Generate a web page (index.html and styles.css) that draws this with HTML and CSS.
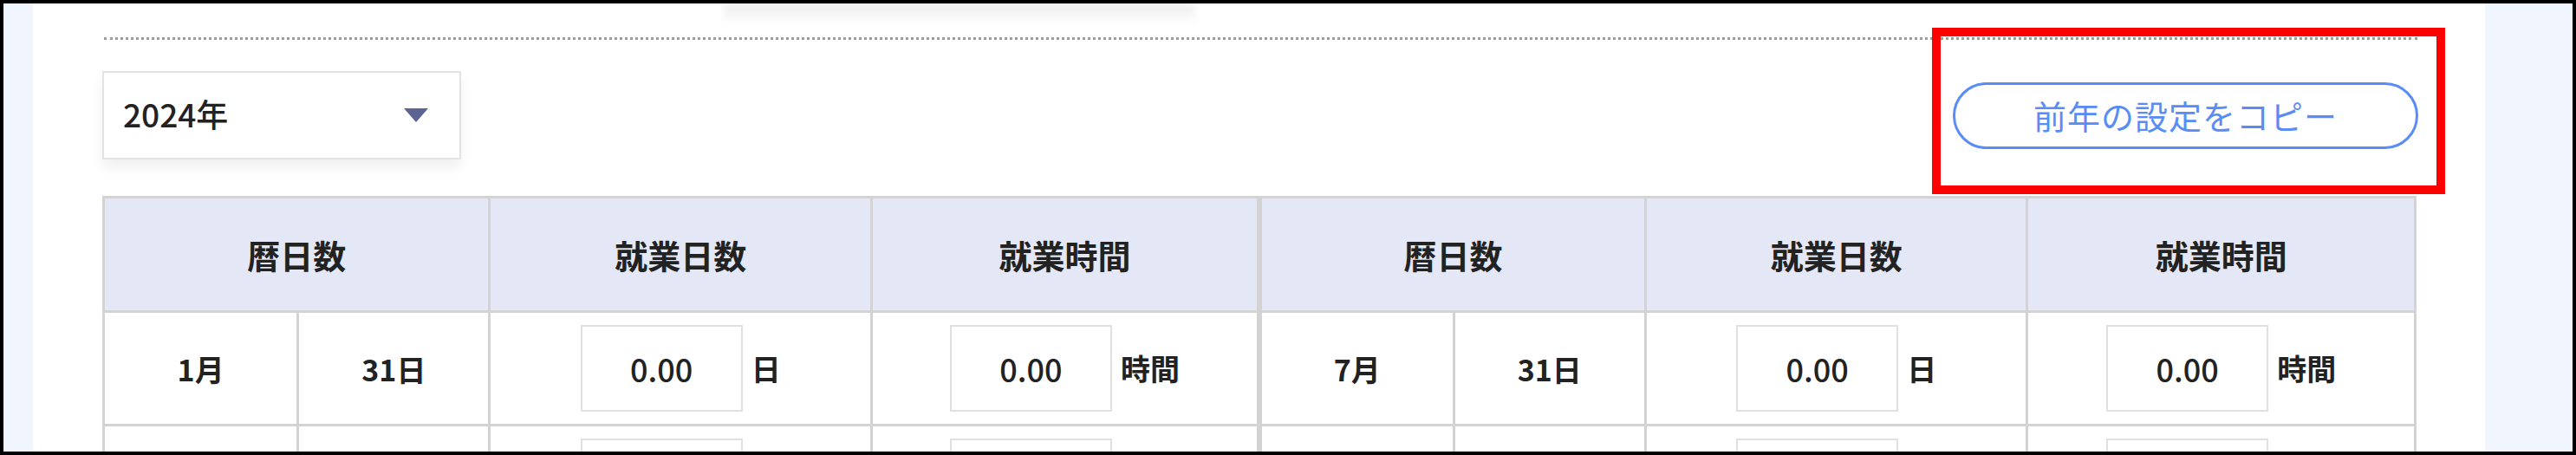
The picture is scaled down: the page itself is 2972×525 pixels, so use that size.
FILE: index.html
```html
<!DOCTYPE html>
<html lang="ja">
<head>
<meta charset="utf-8">
<title>就業カレンダー</title>
<link rel="stylesheet" href="styles.css">
</head>
<body>
<div class="frame">
  <div class="panel">
    <div class="top-shadow"></div>
    <div class="divider"></div>
    <div class="toolbar">
      <div class="select">
        <span class="select-value">2024年</span>
        <svg class="caret" viewBox="0 0 28 16" aria-hidden="true"><path d="M0 0H28L14 16Z" fill="#5b6493"/></svg>
      </div>
      <button class="copy-btn" type="button">前年の設定をコピー</button>
    </div>
    <table class="cal">
      <colgroup>
        <col class="c-month"><col class="c-days"><col class="c-work"><col class="c-hours">
        <col class="c-month"><col class="c-days"><col class="c-work"><col class="c-hours">
      </colgroup>
      <thead>
        <tr>
          <th colspan="2">暦日数</th>
          <th>就業日数</th>
          <th>就業時間</th>
          <th colspan="2" class="half">暦日数</th>
          <th>就業日数</th>
          <th>就業時間</th>
        </tr>
      </thead>
      <tbody>
        <tr>
          <td>1月</td>
          <td>31日</td>
          <td><div class="field"><input class="num" value="0.00"><span class="unit">日</span></div></td>
          <td><div class="field"><input class="num" value="0.00"><span class="unit">時間</span></div></td>
          <td class="half">7月</td>
          <td>31日</td>
          <td><div class="field"><input class="num" value="0.00"><span class="unit">日</span></div></td>
          <td><div class="field"><input class="num" value="0.00"><span class="unit">時間</span></div></td>
        </tr>
        <tr>
          <td>2月</td>
          <td>29日</td>
          <td><div class="field"><input class="num" value="0.00"><span class="unit">日</span></div></td>
          <td><div class="field"><input class="num" value="0.00"><span class="unit">時間</span></div></td>
          <td class="half">8月</td>
          <td>31日</td>
          <td><div class="field"><input class="num" value="0.00"><span class="unit">日</span></div></td>
          <td><div class="field"><input class="num" value="0.00"><span class="unit">時間</span></div></td>
        </tr>
      </tbody>
    </table>
  </div>
  <div class="annotation"></div>
</div>
</body>
</html>
```

FILE: styles.css
```css
* { box-sizing: border-box; }

html, body {
  margin: 0;
  padding: 0;
  background: #fff;
}

body {
  width: 2972px;
  height: 525px;
  overflow: hidden;
  font-family: "Noto Sans CJK JP", "Noto Sans", sans-serif;
  color: #222;
}

.frame {
  position: relative;
  width: 2972px;
  height: 525px;
  border: 4px solid #000;
  background: #f1f5fd;
  padding: 0 101px 0 34px;
  overflow: hidden;
}

.panel {
  background: #fff;
  height: 100%;
  padding: 0 78px 0 80px;
  overflow: hidden;
}

.top-shadow {
  width: 544px;
  height: 24px;
  margin-left: 717px;
  background: linear-gradient(to bottom, #efefef 0%, #f6f6f6 50%, #fff 100%);
  filter: blur(3px);
}

.divider {
  margin: 15px 0 0 2px;
  border-top: 3px dotted #9c9c9c;
}

.toolbar {
  display: flex;
  align-items: center;
  justify-content: space-between;
  margin-top: 36px;
}

.select {
  width: 414px;
  height: 102px;
  display: flex;
  align-items: center;
  justify-content: space-between;
  padding: 0 36px 0 22px;
  border: 2px solid #e3e3e3;
  background: #fff;
  box-shadow: 0 10px 14px rgba(0, 0, 0, 0.06);
}

.select-value {
  font-size: 37px;
  font-weight: 500;
  line-height: 1;
  margin-top: -4px;
}

.caret {
  width: 28px;
  height: 16px;
  display: block;
}

.copy-btn {
  width: 537px;
  height: 77px;
  margin-right: -1px;
  border: 3px solid #5a8cf5;
  border-radius: 40px;
  background: #fff;
  color: #5a8cf5;
  font-family: "Noto Sans CJK JP", "Noto Sans", sans-serif;
  font-size: 38px;
  font-weight: 400;
  letter-spacing: 1px;
  line-height: 1;
  padding: 0;
  display: flex;
  align-items: center;
  justify-content: center;
}

.cal {
  margin-top: 42px;
  width: 2670px;
  table-layout: fixed;
  border-collapse: collapse;
  border: 3px solid #d3d3d3;
}

.c-month { width: 224px; }
.c-days  { width: 221px; }
.c-work  { width: 440px; }
.c-hours { width: 447px; }

.cal th,
.cal td {
  border: 3px solid #d3d3d3;
  padding: 0;
  text-align: center;
  vertical-align: middle;
}

.cal th {
  height: 132px;
  background: #e4e8f6;
  font-size: 38px;
  font-weight: 700;
}

.cal td {
  height: 131px;
  font-size: 34px;
  font-weight: 700;
}

.cal .half {
  border-left: 6px solid #d3d3d3;
}

.field {
  display: flex;
  align-items: center;
  justify-content: center;
  gap: 10px;
}

.num {
  width: 187px;
  height: 100px;
  border: 2px solid #e0e0e0;
  background: #fff;
  text-align: center;
  font-family: "Noto Sans CJK JP", "Noto Sans", sans-serif;
  font-size: 36px;
  font-weight: 500;
  color: #222;
  padding: 0;
  outline: none;
}

.unit {
  font-size: 34px;
  font-weight: 700;
  line-height: 1;
}

.annotation {
  position: absolute;
  left: 2225px;
  top: 28px;
  width: 592px;
  height: 192px;
  border: 10px solid #ff0000;
  pointer-events: none;
}
```
